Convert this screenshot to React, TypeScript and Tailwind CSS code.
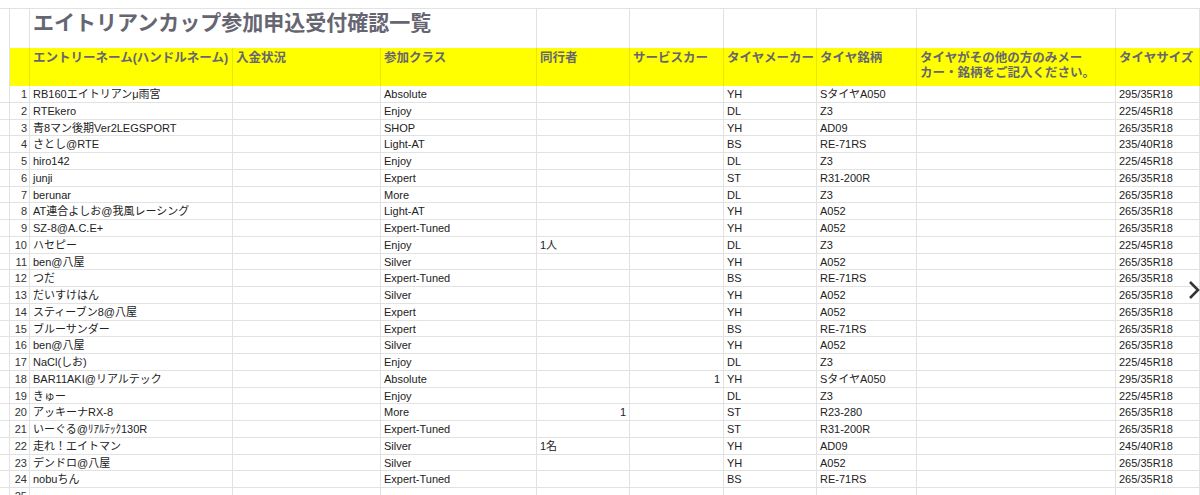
const rows: string[][] = [
["RB160エイトリアンμ雨宮","","Absolute","","","YH","SタイヤA050","","295/35R18"],
["RTEkero","","Enjoy","","","DL","Z3","","225/45R18"],
["青8マン後期Ver2LEGSPORT","","SHOP","","","YH","AD09","","265/35R18"],
["さとし@RTE","","Light-AT","","","BS","RE-71RS","","235/40R18"],
["hiro142","","Enjoy","","","DL","Z3","","225/45R18"],
["junji","","Expert","","","ST","R31-200R","","265/35R18"],
["berunar","","More","","","DL","Z3","","265/35R18"],
["AT連合よしお@我風レーシング","","Light-AT","","","YH","A052","","265/35R18"],
["SZ-8@A.C.E+","","Expert-Tuned","","","YH","A052","","265/35R18"],
["ハセピー","","Enjoy","1人","","DL","Z3","","225/45R18"],
["ben@八屋","","Silver","","","YH","A052","","265/35R18"],
["つだ","","Expert-Tuned","","","BS","RE-71RS","","265/35R18"],
["だいすけはん","","Silver","","","YH","A052","","265/35R18"],
["スティーブン8@八屋","","Expert","","","YH","A052","","265/35R18"],
["ブルーサンダー","","Expert","","","BS","RE-71RS","","265/35R18"],
["ben@八屋","","Silver","","","YH","A052","","265/35R18"],
["NaCl(しお)","","Enjoy","","","DL","Z3","","225/45R18"],
["BAR11AKI@リアルテック","","Absolute","","1","YH","SタイヤA050","","295/35R18"],
["きゅー","","Enjoy","","","DL","Z3","","225/45R18"],
["アッキーナRX-8","","More","1","","ST","R23-280","","265/35R18"],
["いーぐる@ﾘｱﾙﾃｯｸ130R","","Expert-Tuned","","","ST","R31-200R","","265/35R18"],
["走れ！エイトマン","","Silver","1名","","YH","AD09","","245/40R18"],
["デンドロ@八屋","","Silver","","","YH","A052","","265/35R18"],
["nobuちん","","Expert-Tuned","","","BS","RE-71RS","","265/35R18"],
];
const heads = ["エントリーネーム(ハンドルネーム)","入金状況","参加クラス","同行者","サービスカー","タイヤメーカー","タイヤ銘柄","SPECIAL","タイヤサイズ"];
const cols = "grid-cols-[10px_20px_203px_148px_156px_93px_94px_93px_100px_199px_1fr]";
const font = { fontFamily: '"Liberation Sans", Arial, "Noto Sans CJK JP", sans-serif' };
export default function App() {
  return (
    <div className="relative w-[1200px] h-[495px] overflow-hidden bg-white" style={font}>
      <div className="h-[8px]" />
      <div className={`grid ${cols} h-[40px] border-t border-[#e2e2e2]`}>
        <div className="border-r border-[#e2e2e2]" />
        <div className="border-r border-[#e2e2e2]" />
        <div className="col-span-3 border-r border-[#e2e2e2] pl-[3px] pt-[1px] text-[21px] font-bold text-[#666672] leading-[26px] whitespace-nowrap">エイトリアンカップ参加申込受付確認一覧</div>
        {[0,1,2,3,4,5].map(i => <div key={i} className="border-r border-[#e2e2e2]" />)}
      </div>
      <div className={`grid ${cols} h-[38px] bg-[#ffff00]`}>
        <div className="bg-white border-r border-[#e2e2e2]" />
        <div className="border-r border-[#e8e800]" />
        {heads.map((h, i) => (
          <div key={i} className="border-r border-[#e8e800] px-[3px] pt-[3px] text-[12.5px] font-bold text-[#666672] leading-[15px] whitespace-nowrap overflow-hidden">
            {h === "SPECIAL" ? <>タイヤがその他の方のみメー<br />カー・銘柄をご記入ください。</> : h}
          </div>
        ))}
      </div>
      {rows.concat([["","","","","","","","",""]]).map((r, ri) => (
        <div key={ri} className={`grid ${cols} h-[16.75px] border-b border-[#e2e2e2] text-[11px] text-[#222] leading-[16px]`}>
          <div className="border-r border-[#e2e2e2]" />
          <div className="border-r border-[#e2e2e2] text-right pr-[2px] text-[#333]">{ri + 1}</div>
          {r.map((c, ci) => (
            <div key={ci} className={`border-r border-[#e2e2e2] px-[3px] whitespace-nowrap overflow-hidden ${/^\d+$/.test(c) ? "text-right" : ""}`}>{c}</div>
          ))}
        </div>
      ))}
      <div className="absolute left-[1188px] top-[280px] leading-none">
        <svg width="12" height="20" viewBox="0 0 12 20"><path d="M2 2 L10 10 L2 18" fill="none" stroke="#333" strokeWidth="2.5"/></svg>
      </div>
    </div>
  );
}
